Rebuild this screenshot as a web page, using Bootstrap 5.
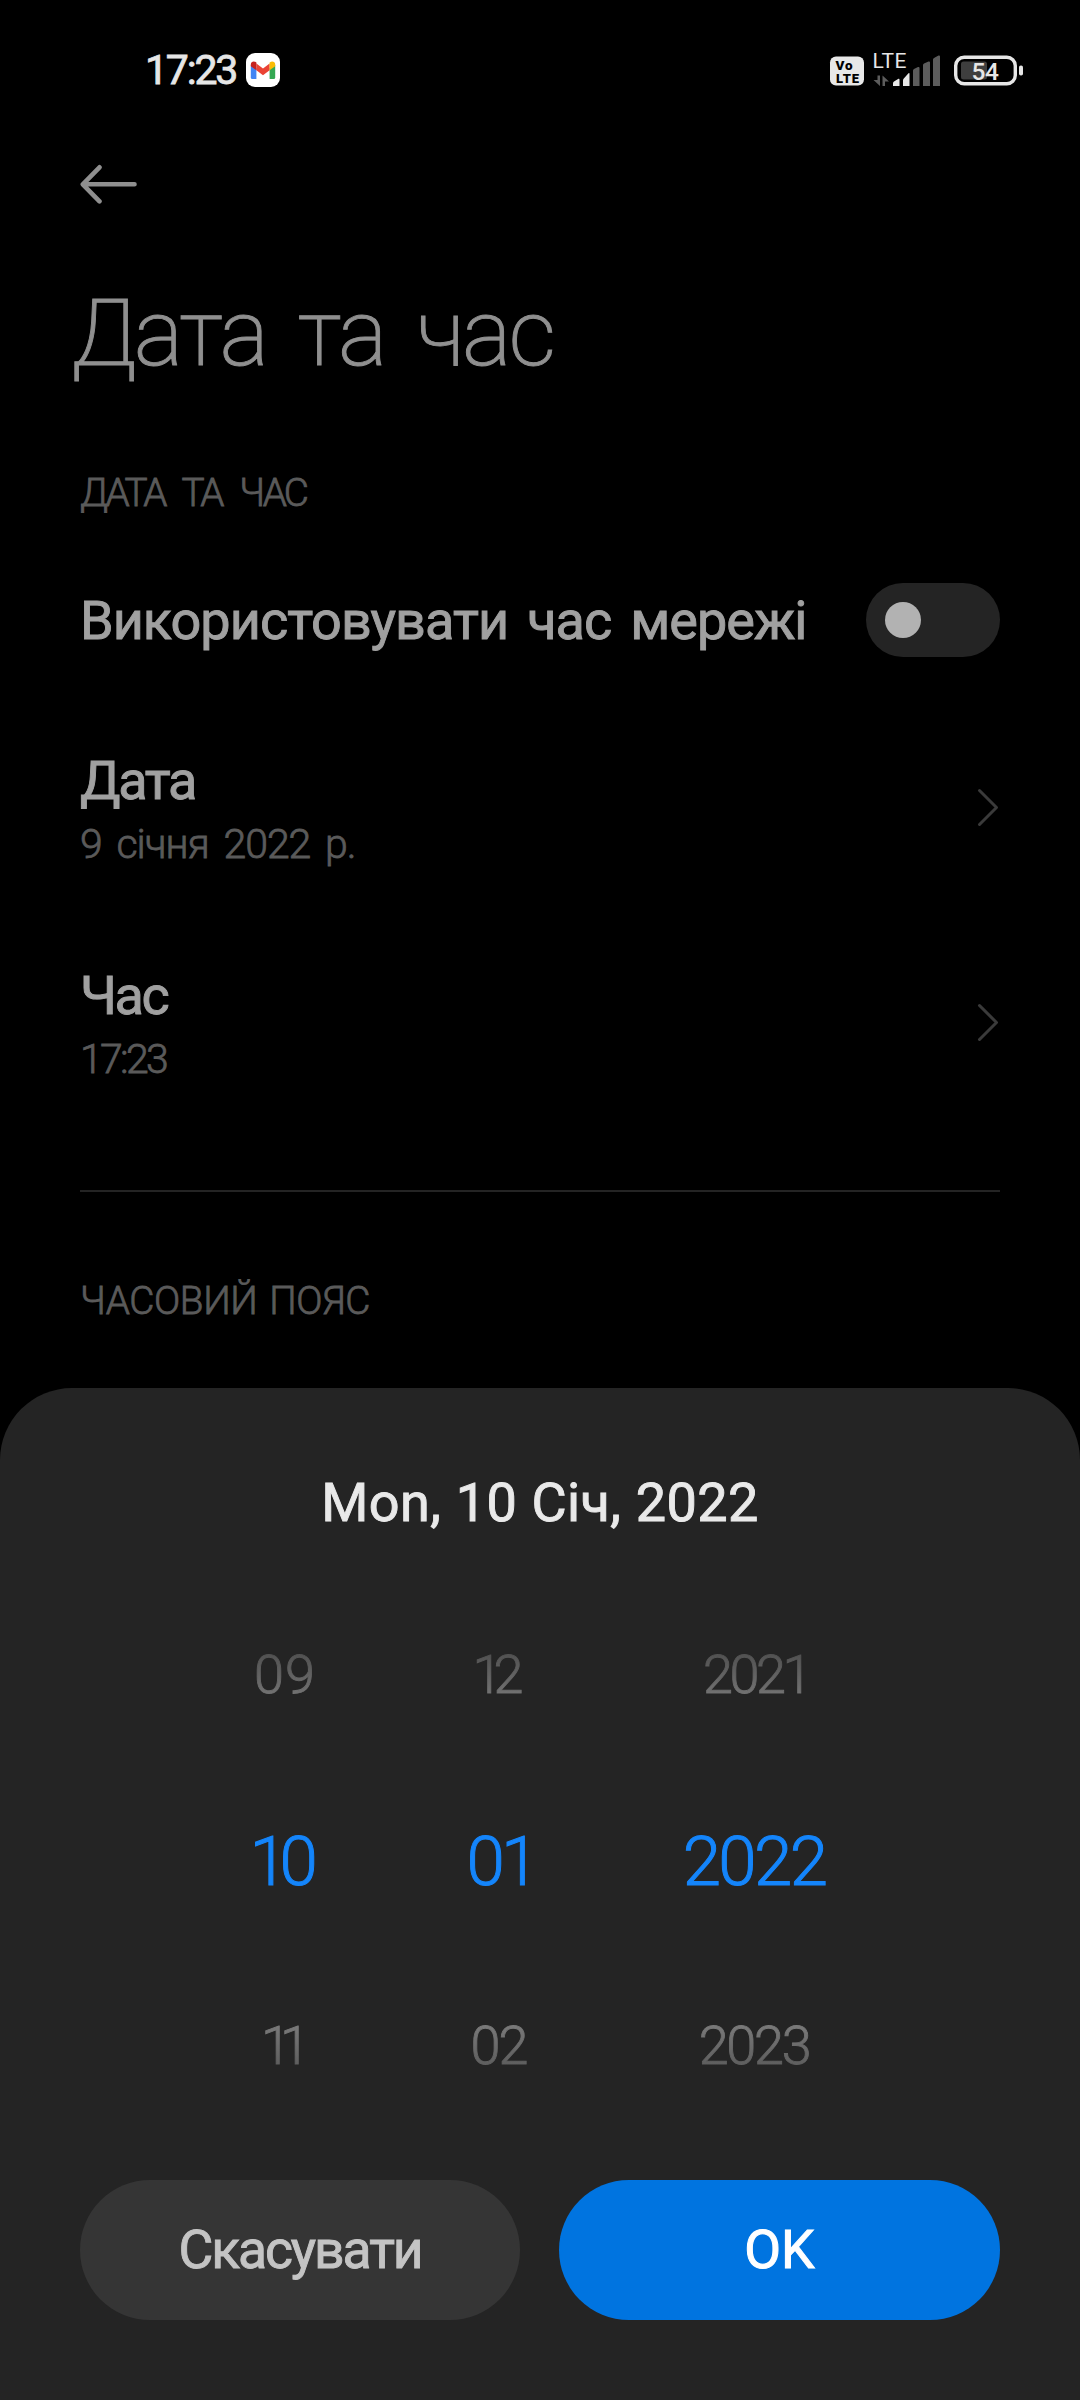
<!DOCTYPE html>
<html lang="uk" data-bs-theme="dark">
<head>
<meta charset="utf-8">
<meta name="viewport" content="width=device-width, initial-scale=1">
<title>Дата та час</title>
<link href="https://cdn.jsdelivr.net/npm/bootstrap@5.3.0/dist/css/bootstrap.min.css" rel="stylesheet">
<style>
  body { background: #000; font-family: Roboto, "Noto Sans", sans-serif; font-kerning: normal; }
  .screen { width: 1080px; height: 2400px; overflow: hidden; white-space: nowrap; }
  .status-bar { height: 140px; padding: 0 57px 0 145px; color: #e6e6e6; }
  .clock { width: 101px; font-size: 41px; font-weight: 400; line-height: 60px; letter-spacing: -2.2px; -webkit-text-stroke: .8px #e6e6e6; }
  .status-icons { margin-top: 1px; }
  .back-row { height: 88px; padding-left: 80px; }
  .page-title { font-size: 93px; font-weight: 200; line-height: 212px; height: 210px; color: #8f8f8f; padding-left: 71px; letter-spacing: -3px; word-spacing: 12.5px; -webkit-text-stroke: .9px #8f8f8f; }
  .section-label { font-size: 38.7px; font-weight: 300; line-height: 109px; height: 109px; color: #5a5a5a; letter-spacing: -2.8px; word-spacing: 11px; -webkit-text-stroke: .8px #5a5a5a; }
  .label-zone { letter-spacing: -.4px; word-spacing: 3px; line-height: 111px; }
  .pref { padding-left: 80px; padding-right: 80px; }
  .pref-name { font-size: 54px; font-weight: 400; line-height: 62px; color: #a0a0a0; letter-spacing: -2.4px; -webkit-text-stroke: .9px #a0a0a0; }
  .pref-value { font-size: 41px; font-weight: 300; line-height: 64px; color: #5a5a5a; letter-spacing: -1.06px; word-spacing: 5.9px; -webkit-text-stroke: .8px #5a5a5a; }
  .value-clock { letter-spacing: -2.7px; }
  .pref-net { height: 153px; padding-bottom: 7px; }
  .name-net { letter-spacing: -.97px; word-spacing: 6.5px; padding-top: 2px; }
  .pref-link { height: 215px; }
  .pref-text { margin-top: 10px; }
  .toggle { width: 134px; height: 74px; padding-left: 19px; background: #242424; }
  .knob { width: 36px; height: 36px; background: #b2b2b2; }
  .rule { height: 2px; margin: 60px 80px 53px; background: #242424; }
  .sheet { height: 1012px; padding: 85px 80px 80px; background: #242424; border-radius: 72px 72px 0 0; }
  .sheet-title { font-size: 54px; font-weight: 400; line-height: 60px; color: #e9e9e9; letter-spacing: .35px; word-spacing: .8px; -webkit-text-stroke: .9px #e9e9e9; }
  .wheels { margin: 49px 0 0 97.5px; font-weight: 300; }
  .wheel { width: 214px; }
  .wheel-year { width: 297px; }
  .opt { height: 186px; line-height: 186px; font-size: 54px; background: linear-gradient(#505050 38%, #747474 62%); -webkit-background-clip: text; background-clip: text; color: transparent; -webkit-text-stroke: .9px transparent; }
  .opt.below { height: 184px; line-height: 184px; background-image: linear-gradient(#7a7a7a 38%, #5c5c5c 62%); }
  .opt.now { font-size: 69px; line-height: 188px; background: none; color: #1485fb; -webkit-text-stroke: 1px #1485fb; }
  .d09 { letter-spacing: 1px; padding-left: 1px; }
  .d10 { letter-spacing: -8.2px; margin-left: -10px; }
  .d11 { letter-spacing: -11px; margin-left: -9px; }
  .m12 { letter-spacing: -9px; margin-left: -10px; }
  .m01 { letter-spacing: -3.8px; padding-left: 5px; }
  .m02 { letter-spacing: -1.95px; }
  .y21 { letter-spacing: -3.4px; padding-left: 4px; }
  .y22 { letter-spacing: -2.6px; }
  .y23 { letter-spacing: -2.3px; }
  .sheet .btn { width: 441px; height: 140px; border: 0; font-size: 53.5px; font-weight: 400; }
  .sheet .btn-cancel { background: #353535; color: #c4c4c4; letter-spacing: -2.1px; width: 440px; -webkit-text-stroke: .9px #c4c4c4; }
  .sheet .btn-ok { background: #0074e0; color: #fff; letter-spacing: 0; -webkit-text-stroke: 1px #fff; }
</style>
</head>
<body>
<div class="screen d-flex flex-column">
  <header class="status-bar d-flex justify-content-between align-items-center">
    <div class="d-flex align-items-center">
      <span class="clock">17:23</span>
      <svg width="34" height="34" viewBox="0 0 34 34"><rect width="34" height="34" rx="9" fill="#fff"/>
        <path d="M4.800 12v12.400q0 1.600 1.600 1.600h4V15z" fill="#4285f4"/><path d="M29.200 12v12.400q0 1.600-1.600 1.600h-4V15z" fill="#34a853"/>
        <path d="M10.400 10.600 17 15.600l6.600-5v6.600L17 22.200l-6.600-5z" fill="#ea4335"/>
        <path d="M4.800 11.500C4.800 8.400 8 7.600 10.400 9.400v7.800l-5.600-4z" fill="#c5221f"/><path d="M29.200 11.500c0-3.100-3.200-3.900-5.600-2.100v7.800l5.600-4z" fill="#fbbc04"/></svg>
    </div>
    <svg class="status-icons" width="213" height="50" viewBox="810 45.500 213 50" font-family="Roboto, sans-serif">
      <rect x="830" y="56" width="34" height="29" rx="6" fill="#e8e8e8"/>
      <g font-weight="900" fill="#000"><text x="835.500" y="69.500" font-size="13.500" textLength="17">Vo</text><text x="836" y="82" font-size="13" textLength="23">LTE</text></g>
      <text x="872.500" y="67" font-size="21" textLength="34" fill="#e6e6e6">LTE</text>
      <g fill="#5c5c5c"><path d="M877.500 75h2.500v10.500l-6.500-6h4zM882.500 85.500V75l6.500 6h-4v4.500z"/>
        <path d="M913 85.500V70q0-1 1-1.500l4-2q1.500-.5 1.500 1v18zM923 85.500V64.500q0-1 1-1.500l4.500-2q1.500-.5 1.500 1v23.500zM933 85.500V59q0-1 1-1.500l4.500-2.500q1.500-.5 1.500 1v29.500z"/></g>
      <path d="M893 85.500v-2.500q0-1.500 1-2l4.500-2.700q1-.5 1 1v6.200zM903 85.500V80q0-1.500 1-2.200l4.500-5q1-.8 1 .6v12.100z" fill="#e8e8e8"/>
      <rect x="961" y="61" width="26" height="18" rx="2.500" fill="#3e3e3e"/>
      <rect x="955.700" y="56.700" width="59.600" height="26.600" rx="8.500" fill="none" stroke="#e6e6e6" stroke-width="3.400"/>
      <rect x="1019" y="65" width="4" height="10" rx="1.800" fill="#e6e6e6"/>
      <text x="971.500" y="79" font-size="24.500" font-weight="500" textLength="27.500" fill="#e6e6e6">54</text>
    </svg>
  </header>

  <div class="back-row d-flex align-items-center">
    <svg width="58" height="40" viewBox="0 0 58 40" fill="none" stroke="#8f8f8f" stroke-width="4.600" stroke-linecap="round" stroke-linejoin="round"><path d="M54.500 20.300H3M19.500 3.300 2.800 20.300l16.700 17"/></svg>
  </div>
  <h1 class="page-title mb-0">Дата та час</h1>

  <div class="section-label pref">ДАТА ТА ЧАС</div>
  <div class="pref pref-net d-flex justify-content-between align-items-center">
    <span class="pref-name name-net">Використовувати час мережі</span>
    <span class="toggle rounded-pill d-flex align-items-center" role="switch" aria-checked="false"><span class="knob rounded-circle"></span></span>
  </div>
  <div class="pref pref-link d-flex justify-content-between align-items-center">
    <div class="pref-text"><div class="pref-name">Дата</div><div class="pref-value">9 січня 2022 р.</div></div>
    <svg width="24" height="40" viewBox="0 0 24 40" fill="none" stroke="#3a3a3a" stroke-width="3" stroke-linecap="round" stroke-linejoin="round"><path d="M3.500 2.500 20.500 19.500 3.500 36.500"/></svg>
  </div>
  <div class="pref pref-link d-flex justify-content-between align-items-center">
    <div class="pref-text"><div class="pref-name">Час</div><div class="pref-value value-clock">17:23</div></div>
    <svg width="24" height="40" viewBox="0 0 24 40" fill="none" stroke="#3a3a3a" stroke-width="3" stroke-linecap="round" stroke-linejoin="round"><path d="M3.500 2.500 20.500 19.500 3.500 36.500"/></svg>
  </div>
  <div class="rule"></div>
  <div class="section-label label-zone pref">ЧАСОВИЙ ПОЯС</div>

  <div class="sheet mt-auto d-flex flex-column flex-shrink-0">
    <div class="sheet-title text-center">Mon, 10 Січ, 2022</div>
    <div class="wheels d-flex text-center">
      <div class="wheel">
        <div class="opt"><span class="d09">09</span></div>
        <div class="opt now"><span class="d10">10</span></div>
        <div class="opt below"><span class="d11">11</span></div>
      </div>
      <div class="wheel">
        <div class="opt"><span class="m12">12</span></div>
        <div class="opt now"><span class="m01">01</span></div>
        <div class="opt below"><span class="m02">02</span></div>
      </div>
      <div class="wheel wheel-year">
        <div class="opt"><span class="y21">2021</span></div>
        <div class="opt now"><span class="y22">2022</span></div>
        <div class="opt below"><span class="y23">2023</span></div>
      </div>
    </div>
    <div class="d-flex justify-content-between mt-auto">
      <button type="button" class="btn btn-cancel rounded-pill">Скасувати</button>
      <button type="button" class="btn btn-ok rounded-pill">OK</button>
    </div>
  </div>
</div>
<script src="https://cdn.jsdelivr.net/npm/bootstrap@5.3.0/dist/js/bootstrap.bundle.min.js"></script>
</body>
</html>
